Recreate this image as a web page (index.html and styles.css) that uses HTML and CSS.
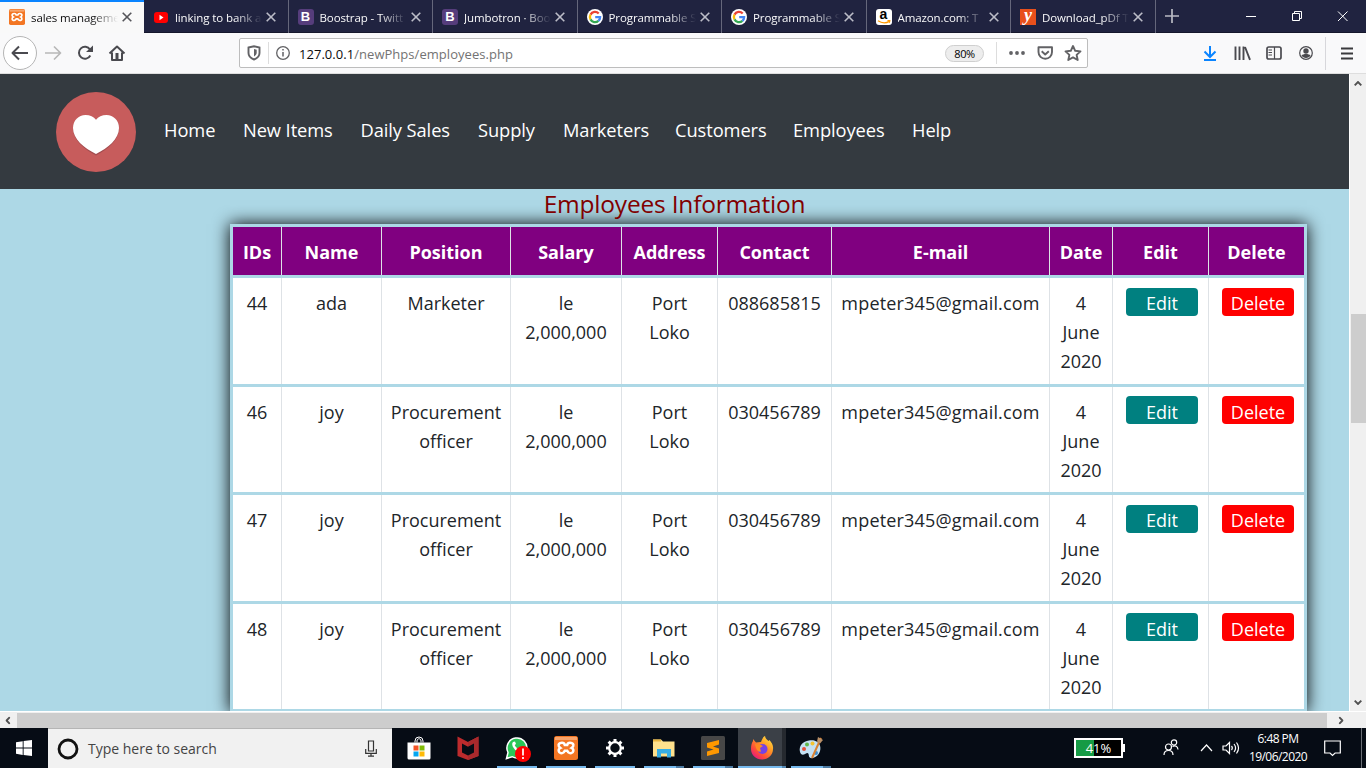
FILE: index.html
```
<!DOCTYPE html>
<html lang="en">
<head>
<meta charset="utf-8">
<title>sales management</title>
<link rel="stylesheet" href="styles.css">
</head>
<body>
<svg class="defs" width="0" height="0">
  <symbol id="x" viewBox="0 0 10 10"><path d="M.7.7l8.600 8.600M9.300.7L.7 9.300" fill="none" stroke="currentColor" stroke-width="1.600"/></symbol>
  <symbol id="xampp" viewBox="0 0 24 24"><rect width="24" height="24" rx="2.500" fill="#f37623"/><path d="M1 1h22v3H1z" fill="#f8a56c"/><path d="M8 6.800c-3 0-3.800 1.700-3.200 3.400.3 1 1 1.400 1.600 1.800-1 .5-2 1.400-1.700 3 .4 2.300 3.200 2.900 4.900 1.400l1.200-1.700h2.400l1.200 1.700c1.700 1.500 4.500.9 4.900-1.400.3-1.600-.7-2.500-1.700-3 .6-.4 1.300-.8 1.600-1.800.6-1.700-.2-3.400-3.200-3.400-1.800 0-2.500.9-2.800 2.200h-2.400C10.500 7.700 9.800 6.800 8 6.800z" fill="none" stroke="#fff" stroke-width="2.500"/></symbol>
  <symbol id="goog" viewBox="0 0 16 16"><circle cx="8" cy="8" r="8" fill="#fff"/><g fill="none" stroke-width="2.300"><path d="M3.500 5.600A5.100 5.100 0 0 1 11.700 4.500" stroke="#ea4335"/><path d="M3.500 10.400a5.100 5.100 0 0 1 0-4.800" stroke="#fbbc05"/><path d="M3.500 10.400a5.100 5.100 0 0 0 7.900 1.500" stroke="#34a853"/><path d="M11.400 11.900A5 5 0 0 0 13.100 8.200H8.200" stroke="#4285f4"/></g></symbol>
  <symbol id="chev" viewBox="0 0 8 5"><path d="M.7.7L4 4 7.300.7" fill="none" stroke="#505050" stroke-width="1.900"/></symbol>
</svg>

<header class="tabs">
  <div class="tab active"><svg class="fav" viewBox="0 0 24 24"><use href="#xampp"/></svg><span class="title">sales manageme</span><svg class="close"><use href="#x"/></svg></div>
  <div class="tab"><svg class="fav" viewBox="0 0 16 16"><rect x="1" y="3" width="14" height="11" rx="3" fill="#f00"/><path d="M6.500 5.800v5.400L10.500 8.500z" fill="#fff"/></svg><span class="title">linking to bank a</span><svg class="close"><use href="#x"/></svg></div>
  <div class="tab"><span class="fav boot">B</span><span class="title">Boostrap - Twitt</span><svg class="close"><use href="#x"/></svg></div>
  <div class="tab"><span class="fav boot">B</span><span class="title">Jumbotron · Boo</span><svg class="close"><use href="#x"/></svg></div>
  <div class="tab"><svg class="fav"><use href="#goog"/></svg><span class="title">Programmable S</span><svg class="close"><use href="#x"/></svg></div>
  <div class="tab"><svg class="fav"><use href="#goog"/></svg><span class="title">Programmable S</span><svg class="close"><use href="#x"/></svg></div>
  <div class="tab"><span class="fav amazon">a<svg viewBox="0 0 14 4"><path d="M1 .8c4 2.600 8 2.600 11.500.3M10.500.3l2.300.4-.6 2" fill="none" stroke="#f90" stroke-width="1.300"/></svg></span><span class="title">Amazon.com: T</span><svg class="close"><use href="#x"/></svg></div>
  <div class="tab"><span class="fav yum">y</span><span class="title">Download_pDf T</span><svg class="close"><use href="#x"/></svg></div>
  <svg class="plus" viewBox="0 0 14 14"><path d="M7 0v14M0 7h14" stroke="#b9bac4" stroke-width="1.700"/></svg>
  <svg class="wins" viewBox="0 0 110 14"><g fill="none" stroke="#fff" stroke-width="1"><path d="M1 7.500h10M47.500 4.500h7v7h-7zM49.500 4.500v-2h7v7h-2M93 2.500l9.500 9.500M102.500 2.500L93 12"/></g></svg>
</header>

<nav class="toolbar">
  <svg class="navicons" viewBox="0 0 140 40"><circle cx="20" cy="20" r="16.500" fill="#fff" stroke="#b5b5b5"/><g fill="none" stroke="#4a4a4f" stroke-width="2" stroke-linejoin="round"><path d="M28 20H13M19 13.500L12.500 20l6.500 6.500"/><path d="M45 20h15M54 13.500l6.500 6.500-6.500 6.500" stroke="#b8b8b8" stroke-width="1.700"/><path d="M90 16.500a6 6 0 1 0 .3 6"/><path d="M109.500 20.500L117 13.500l7.500 7M112 19.500V27h10v-7.500"/></g><path d="M86 19h7v-6.500z" fill="#4a4a4f"/><path d="M115.500 20h3v7h-3z" fill="#4a4a4f"/></svg>
  <div class="urlbar">
    <svg class="shield" viewBox="0 0 50 28"><g fill="none" stroke="#626265"><path d="M8.500 8.500L14 7.300l5.500 1.200V14c0 3.200-2.700 5.500-5.500 6.500-2.800-1-5.500-3.300-5.500-6.500z" stroke-width="1.900"/><circle cx="43" cy="14" r="6.300" stroke-width="1.300"/><path d="M43 13v4.500M43 10v1.600" stroke-width="1.500"/></g><path d="M14 10l2.700.7V14c0 1.500-1.400 2.800-2.700 3.500z" fill="#626265"/><path d="M28.500 3v22" stroke="#ddd"/></svg>
    <span class="url">127.0.0.1<i>/newPhps/employees.php</i></span>
    <span class="zoom">80%</span>
    <svg class="urlicons" viewBox="0 0 94 28"><path d="M2.500 3v22" stroke="#ddd"/><g fill="#626265"><circle cx="17" cy="14" r="1.900"/><circle cx="23" cy="14" r="1.900"/><circle cx="29" cy="14" r="1.900"/></g><g fill="none" stroke="#626265" stroke-width="1.900" stroke-linejoin="round"><path d="M44.500 8.200h13.500V13c0 4-3 6.700-6.700 6.700s-6.800-2.700-6.800-6.700zM47.700 12.300l3.500 3.200 3.600-3.200"/><path d="M79 7l2.200 4.800 5.300.6-3.900 3.500 1.100 5.100-4.700-2.600-4.700 2.600 1.100-5.100-3.900-3.500 5.300-.6z"/></g></svg>
  </div>
  <svg class="rights" viewBox="0 0 170 40"><g fill="none" stroke="#4a4a4f" stroke-width="1.900"><path d="M14 13v11M8.500 18.500L14 24l5.500-5.500M8 27h12" stroke="#0a84ff" stroke-width="2"/><path d="M39.500 13.500V27M43.500 13.500V27M47.500 13.500V27M49 14L54 26.800" stroke-width="1.900"/><rect x="71" y="14" width="14" height="12" rx="1.800" stroke-width="1.700"/><path d="M78.500 14v12M72.500 17h3.500M72.500 19.500h3.500M72.500 22h3.500" stroke-width="1.200"/><circle cx="110" cy="20" r="6.300" stroke-width="1.200"/></g><circle cx="110" cy="18" r="2.700" fill="#4a4a4f"/><path d="M105.500 22.500c1.500-2 7.500-2 9 0-1.600 3.200-7.400 3.200-9 0z" fill="#4a4a4f"/><path d="M129.500 4v33" stroke="#d7d7db"/><path d="M145 15.500h12M145 20.500h12M145 25.500h12" stroke="#3a3a3d" stroke-width="1.800"/></svg>
</nav>

<div class="viewport">
  <main class="page">
    <nav class="sitenav">
      <svg class="logo" viewBox="0 0 80 80"><circle cx="40" cy="40" r="40" fill="#c75c5c"/><path d="M40 63.500C28 57 17 48 17 36.500 17 29 22.500 23.500 29.500 23.500c4.500 0 8.300 1.800 10.500 4.500 2.200-2.700 6-4.500 10.500-4.500C57.500 23.500 63 29 63 36.500 63 48 52 57 40 63.500z" fill="#a44d50"/><path d="M40 62C28 56 17 47 17 36 17 28.500 22.500 23 29.500 23c4.500 0 8.300 1.800 10.500 4.700C42.200 24.800 46 23 50.500 23 57.500 23 63 28.500 63 36 63 47 52 56 40 62z" fill="#fff"/></svg>
      <a class="l1">Home</a><a class="l2">New Items</a><a class="l3">Daily Sales</a><a class="l4">Supply</a><a class="l5">Marketers</a><a class="l6">Customers</a><a class="l7">Employees</a><a class="l8">Help</a>
    </nav>
    <h1>Employees Information</h1>
    <section class="table">
      <div class="row head"><b>IDs</b><b>Name</b><b>Position</b><b>Salary</b><b>Address</b><b>Contact</b><b>E-mail</b><b>Date</b><b>Edit</b><b>Delete</b></div>
      <div class="row"><div>44</div><div>ada</div><div>Marketer</div><div>le<br>2,000,000</div><div>Port<br>Loko</div><div>088685815</div><div class="mail">mpeter345@gmail.com</div><div>4<br>June<br>2020</div><div><button class="edit">Edit</button></div><div><button class="delete">Delete</button></div></div>
      <div class="row even"><div>46</div><div>joy</div><div>Procurement<br>officer</div><div>le<br>2,000,000</div><div>Port<br>Loko</div><div>030456789</div><div class="mail">mpeter345@gmail.com</div><div>4<br>June<br>2020</div><div><button class="edit">Edit</button></div><div><button class="delete">Delete</button></div></div>
      <div class="row"><div>47</div><div>joy</div><div>Procurement<br>officer</div><div>le<br>2,000,000</div><div>Port<br>Loko</div><div>030456789</div><div class="mail">mpeter345@gmail.com</div><div>4<br>June<br>2020</div><div><button class="edit">Edit</button></div><div><button class="delete">Delete</button></div></div>
      <div class="row even"><div>48</div><div>joy</div><div>Procurement<br>officer</div><div>le<br>2,000,000</div><div>Port<br>Loko</div><div>030456789</div><div class="mail">mpeter345@gmail.com</div><div>4<br>June<br>2020</div><div><button class="edit">Edit</button></div><div><button class="delete">Delete</button></div></div>
    </section>
  </main>
  <aside class="vbar"><svg class="up"><use href="#chev"/></svg><i></i><svg class="down"><use href="#chev"/></svg></aside>
</div>
<div class="hbar"><svg class="left"><use href="#chev"/></svg><i></i><svg class="right"><use href="#chev"/></svg></div>

<footer class="taskbar">
  <div class="start"><svg viewBox="0 0 16 16" width="16" height="16"><path d="M0 2.300L6.700 1.200v6.400H0zM7.600 1L16 0v7.600H7.600zM0 8.500h6.700v6.400L0 13.800zM7.600 8.500H16V16l-8.400-1.100z" fill="#fff"/></svg></div>
  <div class="search"><svg class="ring" viewBox="0 0 22 22"><circle cx="11" cy="11" r="9" fill="none" stroke="#111" stroke-width="2.800"/></svg><span>Type here to search</span><svg class="mic" viewBox="0 0 12 17"><path d="M3.500 1h5v10h-5zM.7 9v4.300h10.600V9M6 13.500V16M3 16.200h6" fill="none" stroke="#333" stroke-width="1.200"/></svg></div>
  <div class="apps">
    <div class="app"><svg viewBox="0 0 24 24"><path d="M8 6.500V5a4 4 0 0 1 8 0v1.500M10 6.500V5c0-3 4-3 4 0v1.500" fill="none" stroke="#fff" stroke-width="1"/><path d="M.5 6.500h23V22q0 1.500-1.500 1.500H2Q.5 23.500.5 22z" fill="#fff"/><path d="M6.500 9.500h5v5h-5z" fill="#f35325"/><path d="M12.500 9.500h5v5h-5z" fill="#81bc06"/><path d="M6.500 15.500h5v5h-5z" fill="#05a6f0"/><path d="M12.500 15.500h5v5h-5z" fill="#ffba08"/></svg></div>
    <div class="app"><svg viewBox="0 0 24 24"><path d="M1.500.5L12 6 22.500.5V20L12 24 1.500 20z" fill="#bd2b2d"/><path d="M12 6l10.500-5.500V20L12 24z" fill="#a9292c"/><path d="M6 7.500l6 3.200 6-3.200V16.500L12 19.500 6 16.500z" fill="#060c15"/></svg></div>
    <div class="app on"><svg class="wide" viewBox="0 0 26 26"><path d="M1.500 22.500l1.500-6A10 10 0 1 1 7 20.700z" fill="#29c757" stroke="#fff" stroke-width="1.500"/><path d="M8 6c-3 3 3 11 8 10l1.500-3-3-1.500-1.500 1c-2-1-3-2.500-3.300-3.500L11 8l-1-2.500z" fill="#fff"/><circle cx="18" cy="18" r="8" fill="#f00"/><path d="M18 12.500v7M18 21v2" stroke="#fff" stroke-width="1.700"/></svg></div>
    <div class="app on"><svg viewBox="0 0 24 24"><use href="#xampp"/></svg></div>
    <div class="app on"><svg viewBox="0 0 24 24"><circle cx="12" cy="12" r="5.800" fill="none" stroke="#fff" stroke-width="2.200"/><path d="M12 3v3M12 18v3M3 12h3M18 12h3M5.600 5.600l2.200 2.200M16.200 16.200l2.200 2.200M18.400 5.600l-2.200 2.200M7.800 16.200l-2.200 2.200" stroke="#fff" stroke-width="3"/></svg></div>
    <div class="app on multi"><svg viewBox="0 0 24 24"><path d="M1 3.500h8l2 2h11.500v15H1z" fill="#ffe18d"/><path d="M1 3.500h8v2H1z" fill="#e8b540"/><path d="M5 13h14v8.500h-4v-4h-6v4H5z" fill="#37aee5"/></svg></div>
    <div class="app on multi"><svg viewBox="0 0 24 24"><rect width="24" height="24" rx="1.500" fill="#474747"/><path d="M18 4v4.500L12 10.500l6 2V17L6 20v-4.500l6.500-2L6 11.500V7z" fill="#ff9800"/></svg></div>
    <div class="app on multi current"><svg viewBox="0 0 24 24"><defs><linearGradient id="ff" x1="1" y1="0" x2=".2" y2="1"><stop stop-color="#fff44f"/><stop offset=".4" stop-color="#ff9e25"/><stop offset=".75" stop-color="#ff4b3a"/><stop offset="1" stop-color="#e31587"/></linearGradient></defs><path d="M3 3l3 3.500 5-.5c1-3 2-5 4-6 .4 2.500 2 3.700 3.500 5l1-1C22 7 23.500 9.500 23 13c0 6-5 10.500-11 10.500S1 19 1 13c0-3 .5-6 2-8z" fill="url(#ff)"/><circle cx="12.500" cy="13" r="5" fill="#7542e5"/><path d="M5 8l5 .5 3 1.500-3 2 1 3.500c-3 1-5-2-6-7.500z" fill="#ff8a22"/></svg></div>
    <div class="app on multi"><svg viewBox="0 0 24 24"><path d="M10 4.500C4 5 0 10 .8 15c.8 5 4.500 4 6 2.500 2-1.500 3 0 3 2 .4 3.500 4 3 6.500 1.500C22 18 23 10 19 6.500 16.500 4.300 13 4 10 4.500z" fill="#c4e1f3"/><circle cx="5" cy="13" r="2" fill="#e55039"/><circle cx="8" cy="8.500" r="2" fill="#61b74b"/><circle cx="13.500" cy="7.500" r="2" fill="#f4c430"/><circle cx="17" cy="17" r="2" fill="#3d8ed0"/><path d="M22 2L13 22" stroke="#d98232" stroke-width="2"/><path d="M19 1l5 3-3 3.500-3-2z" fill="#ba9068"/></svg></div>
  </div>
  <div class="tray">
    <div class="battery"><span>41%</span></div>
    <svg class="trayicons" viewBox="0 0 80 20"><g fill="none" stroke="#fff" stroke-width="1.200"><circle cx="5.500" cy="9" r="3"/><path d="M1 17c0-6 9-6 9 0"/><circle cx="11" cy="4.500" r="2.700"/><path d="M9.500 8.500c3-1.500 5.200 0 5.500 3"/><path d="M38 13l5.500-6 5.500 6"/><path d="M60 8h3l3.500-3.500v11L63 12h-3zM68.500 8c1 1.200 1 2.800 0 4M71 6c2 2.500 2 5.500 0 8M73.500 4.500c2.600 3.500 2.600 7.500 0 11"/></g></svg>
    <div class="clock"><span>6:48 PM</span><span>19/06/2020</span></div>
    <svg class="note" viewBox="0 0 17 17"><path d="M.7 1h15.600v12h-5.200L8.500 15.500 6 13H.7z" fill="none" stroke="#fff" stroke-width="1.200"/></svg>
    <i class="peek"></i>
  </div>
</footer>
</body>
</html>
```
FILE: styles.css
```
* { box-sizing: border-box; }
body { margin: 0; width: 1366px; height: 768px; overflow: hidden; display: flex; flex-direction: column; font-family: "Open Sans", "Noto Sans", sans-serif; }
.defs { position: absolute; }
svg { display: block; flex: none; }

.tabs { height: 33px; flex: none; display: flex; align-items: center; background: #202340; border-bottom: 1px solid #15172c; }
.tab { width: 144.500px; height: 33px; padding-left: 9px; display: flex; align-items: center; border-right: 1px solid #65677b; color: #f9f9fa; font-size: 11.500px; padding-top: 2px; }
.tab.active { width: 144px; background: #f9f9f9; color: #0c0c0d; border-right: 0; border-top: 2px solid #0a84ff; padding-top: 0; }
.fav { width: 16px; height: 16px; flex: none; }
.title { width: 91px; margin-left: 6px; flex: none; white-space: nowrap; letter-spacing: -.1px; -webkit-mask-image: linear-gradient(90deg, #000 60px, transparent 87px); mask-image: linear-gradient(90deg, #000 60px, transparent 87px); }
.close { width: 10px; height: 10px; color: #bcbdc8; }
.active .close { color: #55555a; }
.boot { background: #563d7c; border-radius: 3px; color: #fff; font: bold 13px/16px "Liberation Sans", sans-serif; text-align: center; }
.amazon { position: relative; background: #fff; border-radius: 3px; color: #000; font: bold 14px/10px "Liberation Sans", sans-serif; text-align: center; }
.amazon svg { position: absolute; left: 1px; bottom: 1px; width: 14px; height: 4px; }
.yum { background: #e8501c; color: #fff; font: italic bold 18px/12px "Liberation Serif", serif; text-align: center; }
.plus { width: 14px; height: 14px; margin-left: 9px; }
.wins { width: 110px; height: 14px; margin-left: 66px; }

.toolbar { height: 41px; flex: none; display: flex; align-items: flex-start; background: #f9f9fa; border-bottom: 1px solid #dedede; }
.navicons { width: 140px; height: 40px; }
.urlbar { width: 849px; height: 30px; margin: 5px 0 0 99px; border: 1px solid #bdbdbd; border-radius: 2px; background: #fff; display: flex; align-items: center; }
.shield { width: 50px; height: 28px; }
.url { width: 655px; padding: 2px 0 0 9px; font-size: 13px; color: #0c0c0d; letter-spacing: .04px; }
.url i { font-style: normal; color: #737373; }
.zoom { width: 39px; height: 17px; border: 1px solid #cfcfcf; border-radius: 9px; background: #ededed; font-size: 11px; line-height: 15px; text-align: center; letter-spacing: -.4px; }
.urlicons { width: 94px; height: 28px; margin-left: 10px; margin-right: -10px; }
.rights { width: 170px; height: 40px; margin-left: 108px; }

.viewport { height: 637px; flex: none; display: flex; }
.page { width: 1349px; height: 637px; overflow: hidden; background: #add8e6; }
.sitenav { height: 115px; background: #343a40; padding: 18px 0 0 56px; display: flex; color: #fff; font-size: 18.300px; letter-spacing: -.08px; line-height: 75px; white-space: nowrap; }
.logo { width: 80px; height: 80px; margin-right: 28px; }
.l1 { width: 79px; } .l2 { width: 117.500px; } .l3 { width: 117.500px; } .l4 { width: 85px; }
.l5 { width: 112px; } .l6 { width: 118px; } .l7 { width: 119px; }
h1 { margin: 0; height: 35px; color: #800000; font-size: 24.500px; letter-spacing: -.2px; font-weight: 400; line-height: 29px; text-align: center; }
.table { width: 1077px; margin-left: 230px; border: 3px solid #add8e6; border-bottom: 0; box-shadow: 0 0 16px #000; color: #212529; font-size: 18px; line-height: 28.800px; text-align: center; }
.row { height: 109px; display: grid; grid-template-columns: 49px 100px 129px 111px 96px 114px 218px 63px 96px 95px; border-bottom: 3px solid #add8e6; background: #fff; white-space: nowrap; }
.row > * { padding-top: 11px; border-right: 1px solid #dee2e6; }
.row > :last-child { border-right: 0; }
.even { height: 108px; }
.mail { letter-spacing: .17px; }
.head { height: 51px; background: #800080; color: #fff; }
.head > * { padding-top: 10.500px; }
button { display: block; width: 72px; height: 28px; margin: -1px 0 0 13px; padding: 1px 0 0; border: 0; border-radius: 4px; color: #fff; font: 18px/28px "Open Sans", sans-serif; }
.even button { margin-top: -2px; padding-top: 2px; }
.edit { background: #008080; }
.delete { background: #f00; }

.vbar { width: 17px; background: #f0f0f0; border-left: 1px solid #fff; display: flex; flex-direction: column; align-items: center; }
.vbar svg, .hbar svg { width: 8px; height: 5px; }
.up { margin-top: 7px; transform: rotate(180deg); }
.vbar i { width: 15px; height: 109px; margin-top: 228px; background: #cdcdcd; }
.down { margin-top: 277px; }
.hbar { height: 17px; flex: none; background: #f0f0f0; border-top: 1px solid #fff; display: flex; align-items: center; }
.hbar i { width: 1310px; height: 15px; background: #cdcdcd; }
.left { margin: 0 5px 0 4px; transform: rotate(90deg); }
.right { margin-left: 10px; transform: rotate(-90deg); }

.taskbar { height: 40px; flex: none; display: flex; background: #060c15; color: #fff; }
.start { width: 48px; display: flex; align-items: center; justify-content: center; }
.search { width: 344px; background: #f1f1f1; border-top: 1px solid #b5b5b5; color: #444; display: flex; align-items: center; font-size: 14px; }
.ring { width: 22px; height: 22px; margin: 0 9px; }
.search span { width: 269px; }
.mic { width: 12px; height: 17px; margin-left: 8px; }
.apps { display: flex; padding-left: 2px; }
.app { width: 49px; height: 40px; padding: 8px 0 0 12.500px; display: flex; flex-direction: column; position: relative; }
.app svg { width: 24px; height: 24px; }
.app .wide { width: 26px; height: 26px; }
.on::after { content: ""; position: absolute; left: 5px; bottom: 0; width: 40px; height: 2px; background: #76b9ed; }
.multi::after { background: linear-gradient(90deg, #76b9ed 32px, #4c7ba3 32px); }
.current { background: linear-gradient(90deg, transparent 0, transparent 1px, #3b4047 1px 45px, #25292f 45px 49px); }
.current::after { left: 1px; width: 48px; background: linear-gradient(90deg, #76b9ed 44px, #5587b1 44px); }
.tray { margin-left: auto; display: flex; align-items: center; height: 40px; width: 293px; }
.battery { width: 49px; height: 20px; margin-left: 1px; border: 2px solid #fff; background: linear-gradient(90deg, #169b45 18px, #000 18px); font-size: 13px; line-height: 16px; text-align: center; position: relative; }
.battery::after { content: ""; position: absolute; right: -4px; top: 4px; width: 2px; height: 8px; background: #fff; }
.trayicons { width: 80px; height: 20px; margin-left: 40px; }
.clock { width: 66px; margin: -1px 0 0 2px; font-size: 12px; line-height: 18px; text-align: center; display: flex; flex-direction: column; letter-spacing: -.55px; white-space: nowrap; }
.note { width: 17px; height: 17px; margin-left: 13px; }
.peek { width: 1px; height: 40px; margin-left: 20px; background: #6a6e75; }
```
